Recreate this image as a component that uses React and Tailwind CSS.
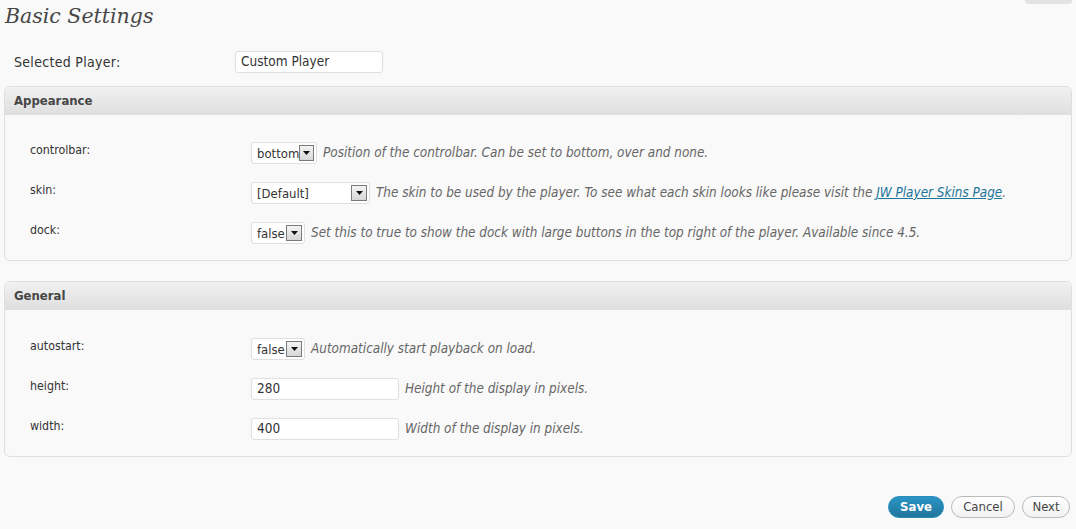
import React from "react";

const font = { fontFamily: '"DejaVu Sans Condensed", "DejaVu Sans", Verdana, sans-serif' };

function Arrow() {
  return (
    <span className="flex h-[16px] w-[16px] items-center justify-center border border-[#7a7a7a] bg-gradient-to-b from-[#f4f4f4] to-[#d6d6d6]">
      <svg width="7" height="4" viewBox="0 0 7 4"><path d="M0 0h7L3.5 4z" fill="#111" /></svg>
    </span>
  );
}

function Select({ value, width }) {
  return (
    <div className={`flex h-[22px] items-center justify-between rounded-[3px] border border-[#dfdfdf] bg-white pl-[5px] pr-[2px] ${width}`}>
      <span className="text-[13px] leading-none text-[#333]">{value}</span>
      <Arrow />
    </div>
  );
}

function TextInput({ value }) {
  return (
    <div className="flex h-[22px] w-[148px] items-center rounded-[3px] border border-[#dfdfdf] bg-white pl-[5px]">
      <span className="text-[13.5px] leading-none text-[#333]">{value}</span>
    </div>
  );
}

function Row({ label, control, children }) {
  return (
    <div className="flex h-[40px] items-center">
      <div className="w-[221px] pb-[6px] text-[12.3px] text-[#333]">{label}</div>
      {control}
      <div className="ml-[6px] text-[13.4px] italic text-[#666]">{children}</div>
    </div>
  );
}

function Panel({ title, children, className }) {
  return (
    <div className={`mx-[4px] rounded-[6px] border border-[#dfdfdf] bg-[#f9f9f9] ${className}`}>
      <div className="flex h-[28px] items-center rounded-t-[6px] border-b border-[#dfdfdf] bg-gradient-to-b from-[#f1f1f1] to-[#dfdfdf] px-[9px] text-[13px] font-bold text-[#464646]">
        {title}
      </div>
      {children}
    </div>
  );
}

export default function App() {
  return (
    <div className="relative h-[529px] w-[1076px] overflow-hidden bg-[#f9f9f9]" style={font}>
      <div className="absolute right-[4px] top-0 h-[4px] w-[47px] rounded-b-[3px] bg-[#e3e3e3]" />
      <h2 className="pl-[5px] pt-[1px] italic leading-[30px] text-[#464646]" style={{ fontFamily: '"DejaVu Serif", Georgia, serif', fontSize: "20.5px" }}>
        Basic Settings
      </h2>
      <div className="mt-[20px] flex h-[22px] items-center pl-[14px]">
        <div className="w-[221px] text-[14px] tracking-[0.3px] text-[#333]">Selected Player:</div>
        <TextInput value="Custom Player" />
      </div>
      <Panel title="Appearance" className="mt-[13px]">
        <div className="pb-[7px] pl-[25px] pt-[18px]">
          <Row label="controlbar:" control={<Select value="bottom" width="w-[66px]" />}>
            Position of the controlbar. Can be set to bottom, over and none.
          </Row>
          <Row label="skin:" control={<Select value="[Default]" width="w-[119px]" />}>
            The skin to be used by the player. To see what each skin looks like please visit the{" "}
            <a className="text-[#21759b] underline">JW Player Skins Page</a>.
          </Row>
          <Row label="dock:" control={<Select value="false" width="w-[54px]" />}>
            Set this to true to show the dock with large buttons in the top right of the player. Available since 4.5.
          </Row>
        </div>
      </Panel>
      <Panel title="General" className="mt-[20px]">
        <div className="pb-[7px] pl-[25px] pt-[19px]">
          <Row label="autostart:" control={<Select value="false" width="w-[54px]" />}>
            Automatically start playback on load.
          </Row>
          <Row label="height:" control={<TextInput value="280" />}>
            Height of the display in pixels.
          </Row>
          <Row label="width:" control={<TextInput value="400" />}>
            Width of the display in pixels.
          </Row>
        </div>
      </Panel>
      <div className="mt-[39px] flex justify-end gap-[7px] pr-[6px]">
        <button className="h-[22px] w-[56px] rounded-full border border-[#298cba] bg-gradient-to-b from-[#2a95c5] to-[#21759b] text-[13px] font-bold text-white">
          Save
        </button>
        <button className="h-[22px] w-[64px] rounded-full border border-[#bbb] bg-gradient-to-b from-white to-[#f2f2f2] text-[13px] text-[#464646]">
          Cancel
        </button>
        <button className="h-[22px] w-[48px] rounded-full border border-[#bbb] bg-gradient-to-b from-white to-[#f2f2f2] text-[13px] text-[#464646]">
          Next
        </button>
      </div>
    </div>
  );
}
